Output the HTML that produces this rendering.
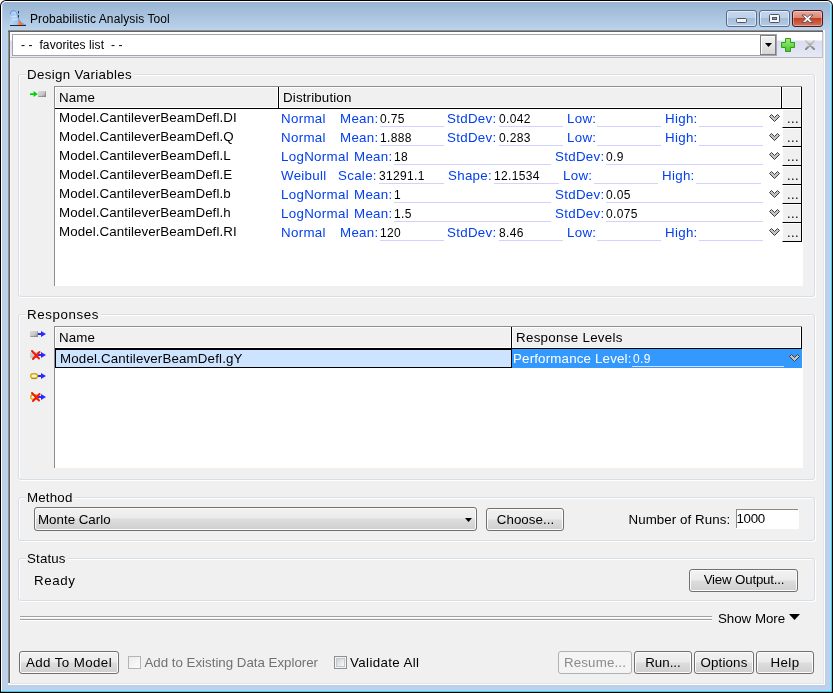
<!DOCTYPE html>
<html>
<head>
<meta charset="utf-8">
<title>Probabilistic Analysis Tool</title>
<style>
html,body{margin:0;padding:0;background:#fff;}
body{width:833px;height:693px;overflow:hidden;position:relative;font-family:"Liberation Sans",Arial,sans-serif;font-size:13px;color:#000;}
.a{position:absolute;}
.t{position:absolute;white-space:nowrap;line-height:19px;font-size:13.33px;letter-spacing:0.15px;}
.b{color:#0540ee;letter-spacing:0.3px;}
.n{letter-spacing:0.08px;}
.v{font-size:12px;letter-spacing:0.33px;margin-top:1px;}
/* window frame */
#w0{left:0;top:0;width:833px;height:693px;background:#000;border-radius:6px 6px 0 0;}
#w1{left:1px;top:1px;width:831px;height:691px;background:#fff;border-radius:5px 5px 0 0;}
#w2{left:2px;top:2px;width:829px;height:689px;background:linear-gradient(#98b4d2 0px,#bbd3ec 28px,#bdd2ea 40px,#bdd2ea 100%);border-radius:4px 4px 0 0;box-shadow:inset 1px 0 0 #b4cfea,inset -1px -1px 0 #c4d0e8;}
#cyr{left:831px;top:4px;width:1px;height:688px;background:#29d3f2;}
#cyb{left:1px;top:691px;width:831px;height:1px;background:#29d3f2;}
#client{left:8px;top:30px;width:817px;height:655px;background:#fff;box-shadow:1px 1px 0 #b4cfea;}
#cbg{left:10px;top:32px;width:813px;height:651px;background:#f0f0f0;border-right:1px solid #e4e4e4;border-bottom:1px solid #e4e4e4;}
#cl{left:8px;top:30px;width:3px;height:653px;background:linear-gradient(90deg,#8e8e8e 1px,#646464 1px,#646464 2px,#f8f8f8 2px);}
#ct{left:8px;top:30px;width:815px;height:2px;background:linear-gradient(#8e8e8e 1px,#646464 1px);}
/* toolbar */
#tb{left:10px;top:32px;width:813px;height:25px;background:linear-gradient(#fff 0,#fff 8px,#d9ddf0 9px,#e6e8f5 25px);}
#tbl{left:10px;top:57px;width:813px;height:1px;background:#b8b8b8;}
#combo{left:12px;top:34px;width:763px;height:20px;border:1px solid #a3a3ad;background:#fff;}
#cbtn{left:760px;top:35px;width:14px;height:18px;border:1px solid #7e7e7e;background:linear-gradient(#f4f4f4,#d6d6d6);box-shadow:inset 1px 1px 0 #fff;}
/* group boxes */
.g{position:absolute;border:1px solid #d5dfe5;border-radius:3px;box-shadow:1px 1px 0 #fff,inset 1px 1px 0 #fff;box-sizing:border-box;}
.gl{position:absolute;background:#f0f0f0;white-space:nowrap;line-height:15px;font-size:13.33px;letter-spacing:0.32px;padding:0 2px 0 1px;}
/* tables */
.tbl{position:absolute;background:#fff;}
.hd{position:absolute;background:#f0f0f0;}
.ul{position:absolute;height:1px;background:#d2d2ff;}
/* buttons */
.btn{position:absolute;box-sizing:border-box;border:1px solid #707070;border-radius:3px;background:linear-gradient(#f2f2f2 0,#ebebeb 10px,#dddddd 11px,#cfcfcf 100%);box-shadow:inset 0 0 0 1px #fcfcfc;text-align:center;font-size:13.33px;letter-spacing:0.15px;white-space:nowrap;}
.btn.dis{border-color:#adb2b5;background:#f4f4f4;color:#8b8b8b;box-shadow:none;}
</style>
</head>
<body>
<div id="root" style="position:absolute;left:0;top:0;width:833px;height:693px;will-change:transform;">
<div class="a" id="w0"></div>
<div class="a" id="w1"></div>
<div class="a" id="w2"></div>
<div class="a" id="cyr"></div>
<div class="a" id="cyb"></div>
<div class="a" id="client"></div>
<div class="a" id="cbg"></div>
<div class="a" id="cl"></div>
<div class="a" id="ct"></div>
<svg class="a" style="left:10px;top:10px" width="16" height="16" viewBox="0 0 16 16">
  <defs><linearGradient id="hg" x1="0" y1="0" x2="1" y2="1"><stop offset="0" stop-color="#8dbcf2"/><stop offset="0.5" stop-color="#b4d3f6"/><stop offset="1" stop-color="#8fbef4"/></linearGradient></defs>
  <path d="M0 15 V4 C0 1.2 1.6 0.2 3.6 0.2 C5.6 0.2 6.6 1.6 7.2 3.4 C7.9 5.6 8.1 7.6 8.6 9.2 V15 Z" fill="url(#hg)"/>
  <path d="M0.4 4.2 C0.4 1.4 1.8 0.6 3.6 0.6 C5.4 0.6 6.3 1.8 6.9 3.4" fill="none" stroke="#4c8ee4" stroke-width="1" opacity="0.85"/>
  <path d="M1.4 3.4 C2.2 2.2 4.6 2.0 5.6 3.4 M0.8 6.5 H6.5 M2 9.5 H7.6" fill="none" stroke="#d6e8fb" stroke-width="0.9" opacity="0.8"/>
  <path d="M8.3 9 C9.6 11.6 12 13.8 15.4 15 H8.3 Z" fill="#f9753f"/>
  <path d="M6.8 3.2 C7.8 6 8.6 9.4 10.2 11.4 C11.8 13.2 13.6 14.2 15.6 14.8" fill="none" stroke="#5a94e2" stroke-width="0.9" opacity="0.9"/>
  <path d="M8.5 1 V3.5 M8.5 5 V7.5" stroke="#2f3740" stroke-width="1"/>
  <rect x="0" y="15" width="16" height="1" fill="#2a2a2a"/>
</svg>
<div class="t" id="title" style="left:30px;top:10px;font-size:12px;line-height:19px;letter-spacing:0.1px;">Probabilistic Analysis Tool</div>
<!-- caption buttons -->
<div class="a capb" style="left:726px;"></div>
<div class="a capb" style="left:759px;"></div>
<div class="a capb capx" style="left:792px;"></div>
<svg class="a" style="left:736px;top:18px" width="11" height="5" viewBox="0 0 11 5"><rect x="0.5" y="0.5" width="10" height="4" rx="1" fill="#f4f4f4" stroke="#4b5563" stroke-width="1"/></svg>
<svg class="a" style="left:769px;top:14px" width="11" height="9" viewBox="0 0 11 9"><rect x="0.5" y="0.5" width="10" height="8" rx="1" fill="#f6f6f6" stroke="#4b5563" stroke-width="1"/><rect x="3.5" y="3.5" width="4" height="2" fill="#7fa3cf" stroke="#4b5563" stroke-width="1"/></svg>
<svg class="a" style="left:801px;top:13.6px" width="13" height="9.6" viewBox="0 0 13 11" preserveAspectRatio="none"><path d="M1 1.2 H4.2 L6.5 3.6 L8.8 1.2 H12 L8.4 5.5 L12 9.8 H8.8 L6.5 7.4 L4.2 9.8 H1 L4.6 5.5 Z" fill="#fbfbfb" stroke="#4d4f63" stroke-width="1" stroke-linejoin="round"/></svg>
<style>
.capb{top:10px;width:31px;height:17px;box-sizing:border-box;border:1px solid #586a8c;border-radius:3px;background:linear-gradient(#c3d6ec 0,#bcd0e8 47%,#a3bddb 50%,#b4cbe5 100%);box-shadow:inset 0 0 0 1px rgba(255,255,255,.55);}
.capx{border-color:#4a1620;background:linear-gradient(#e9a99b 0,#dc8675 47%,#c2401f 50%,#d4735c 100%);box-shadow:inset 0 0 0 1px rgba(255,255,255,.35);}
</style>
<div class="a" id="tb"></div>
<div class="a" id="tbl"></div>
<div class="a" style="left:822px;top:32px;width:1px;height:26px;background:#c2c2c2"></div>
<div class="a" id="combo"></div>
<div class="t" style="left:21px;top:36px;font-size:12px;line-height:19px;white-space:pre;letter-spacing:0.09px;">- -  favorites list  - -</div>
<div class="a" id="cbtn"></div>
<svg class="a" style="left:765px;top:43px" width="7" height="4" viewBox="0 0 7 4"><path d="M0 0 H7 L3.5 4 Z" fill="#000"/></svg>
<svg class="a" style="left:781px;top:38px" width="14" height="14" viewBox="0 0 14 14">
  <defs><linearGradient id="gp" x1="0" y1="0" x2="0" y2="1"><stop offset="0" stop-color="#9cec7c"/><stop offset="1" stop-color="#4cc62a"/></linearGradient></defs>
  <path d="M4.5 0.5 H9.5 V4.5 H13.5 V9.5 H9.5 V13.5 H4.5 V9.5 H0.5 V4.5 H4.5 Z" fill="url(#gp)" stroke="#2f9e16" stroke-width="1" stroke-linejoin="round"/>
</svg>
<svg class="a" style="left:805px;top:40px" width="10" height="10" viewBox="0 0 10 10">
  <defs><linearGradient id="gx" x1="0" y1="0" x2="0" y2="1"><stop offset="0" stop-color="#cfcfcf"/><stop offset="0.5" stop-color="#a9a9a9"/><stop offset="1" stop-color="#858585"/></linearGradient></defs>
  <path d="M1 1 L9 9 M9 1 L1 9" stroke="url(#gx)" stroke-width="2" stroke-linecap="round" fill="none"/>
</svg>
<div class="g" style="left:18px;top:74px;width:797px;height:223px"></div>
<div class="gl" style="left:26px;top:67px">Design Variables</div>
<svg class="a" style="left:30px;top:91px" width="16" height="6" viewBox="0 0 16 6">
  <defs><linearGradient id="gb" x1="0" y1="0" x2="1" y2="1"><stop offset="0" stop-color="#dcdcdc"/><stop offset="0.6" stop-color="#c4c4c4"/><stop offset="1" stop-color="#777"/></linearGradient></defs>
  <path d="M0 2.2 H3.6 V0 L7.8 3 L3.6 6 V3.9 H0 Z" fill="#00d400"/>
  <rect x="8" y="0" width="8" height="6" fill="url(#gb)"/>
  <path d="M8.5 5.5 H15.5 V0.5" stroke="#8c8c8c" stroke-width="1" fill="none" opacity="0.8"/>
</svg>
<!-- table 1 -->
<div class="a" style="left:54px;top:86px;width:748px;height:200px;background:#8e8e8e"></div>
<div class="tbl" style="left:55px;top:87px;width:748px;height:199px"></div><div class="hd" style="left:802px;top:86px;width:1px;height:23px"></div>
<div class="hd" style="left:56px;top:88px;width:221px;height:19px"></div>
<div class="hd" style="left:280px;top:88px;width:500px;height:19px"></div>
<div class="hd" style="left:783px;top:88px;width:17px;height:19px"></div>
<div class="a" style="left:55px;top:108px;width:747px;height:1px;background:#000"></div>
<div class="a" style="left:278px;top:87px;width:1px;height:22px;background:#000"></div>
<div class="a" style="left:781px;top:87px;width:1px;height:22px;background:#000"></div>
<div class="a" style="left:801px;top:87px;width:1px;height:155px;background:#000"></div>
<div class="t" style="left:59px;top:87px;line-height:21px">Name</div>
<div class="t" style="left:283px;top:87px;line-height:21px">Distribution</div>
<!-- row 0 -->
<div class="t n" style="left:59px;top:108px">Model.CantileverBeamDefl.DI</div>
<div class="t b" style="left:281px;top:109px">Normal</div>
<div class="t b" style="left:340px;top:109px">Mean:</div>
<div class="t v" style="left:380px;top:109px">0.75</div>
<div class="ul" style="left:380px;top:126px;width:64px"></div>
<div class="t b" style="left:447px;top:109px">StdDev:</div>
<div class="t v" style="left:499px;top:109px">0.042</div>
<div class="ul" style="left:499px;top:126px;width:64px"></div>
<div class="t b" style="left:567px;top:109px">Low:</div>
<div class="ul" style="left:597px;top:126px;width:64px"></div>
<div class="t b" style="left:665px;top:109px">High:</div>
<div class="ul" style="left:699px;top:126px;width:64px"></div>
<svg class="a chev" style="left:769px;top:114px" width="11" height="8" viewBox="0 0 11 8"><path d="M0.5 2.5 L2.5 0.5 L5.5 3.5 L8.5 0.5 L10.5 2.5 L5.5 7.5 Z" fill="#c3c3c3" stroke="#3e3e3e" stroke-width="1"/></svg>
<div class="a eb" style="left:782px;top:109px"><span>...</span></div>
<!-- row 1 -->
<div class="t n" style="left:59px;top:127px">Model.CantileverBeamDefl.Q</div>
<div class="t b" style="left:281px;top:128px">Normal</div>
<div class="t b" style="left:340px;top:128px">Mean:</div>
<div class="t v" style="left:380px;top:128px">1.888</div>
<div class="ul" style="left:380px;top:145px;width:64px"></div>
<div class="t b" style="left:447px;top:128px">StdDev:</div>
<div class="t v" style="left:499px;top:128px">0.283</div>
<div class="ul" style="left:499px;top:145px;width:64px"></div>
<div class="t b" style="left:567px;top:128px">Low:</div>
<div class="ul" style="left:597px;top:145px;width:64px"></div>
<div class="t b" style="left:665px;top:128px">High:</div>
<div class="ul" style="left:699px;top:145px;width:64px"></div>
<svg class="a chev" style="left:769px;top:133px" width="11" height="8" viewBox="0 0 11 8"><path d="M0.5 2.5 L2.5 0.5 L5.5 3.5 L8.5 0.5 L10.5 2.5 L5.5 7.5 Z" fill="#c3c3c3" stroke="#3e3e3e" stroke-width="1"/></svg>
<div class="a eb" style="left:782px;top:128px"><span>...</span></div>
<!-- row 2 -->
<div class="t n" style="left:59px;top:146px">Model.CantileverBeamDefl.L</div>
<div class="t b" style="left:281px;top:147px">LogNormal</div>
<div class="t b" style="left:354px;top:147px">Mean:</div>
<div class="t v" style="left:394px;top:147px">18</div>
<div class="ul" style="left:394px;top:164px;width:157px"></div>
<div class="t b" style="left:555px;top:147px">StdDev:</div>
<div class="t v" style="left:606px;top:147px">0.9</div>
<div class="ul" style="left:606px;top:164px;width:157px"></div>
<svg class="a chev" style="left:769px;top:152px" width="11" height="8" viewBox="0 0 11 8"><path d="M0.5 2.5 L2.5 0.5 L5.5 3.5 L8.5 0.5 L10.5 2.5 L5.5 7.5 Z" fill="#c3c3c3" stroke="#3e3e3e" stroke-width="1"/></svg>
<div class="a eb" style="left:782px;top:147px"><span>...</span></div>
<!-- row 3 -->
<div class="t n" style="left:59px;top:165px">Model.CantileverBeamDefl.E</div>
<div class="t b" style="left:281px;top:166px">Weibull</div>
<div class="t b" style="left:338px;top:166px">Scale:</div>
<div class="t v" style="left:379px;top:166px">31291.1</div>
<div class="ul" style="left:379px;top:183px;width:65px"></div>
<div class="t b" style="left:448px;top:166px">Shape:</div>
<div class="t v" style="left:494px;top:166px">12.1534</div>
<div class="ul" style="left:494px;top:183px;width:65px"></div>
<div class="t b" style="left:563px;top:166px">Low:</div>
<div class="ul" style="left:594px;top:183px;width:64px"></div>
<div class="t b" style="left:662px;top:166px">High:</div>
<div class="ul" style="left:696px;top:183px;width:65px"></div>
<svg class="a chev" style="left:769px;top:171px" width="11" height="8" viewBox="0 0 11 8"><path d="M0.5 2.5 L2.5 0.5 L5.5 3.5 L8.5 0.5 L10.5 2.5 L5.5 7.5 Z" fill="#c3c3c3" stroke="#3e3e3e" stroke-width="1"/></svg>
<div class="a eb" style="left:782px;top:166px"><span>...</span></div>
<!-- row 4 -->
<div class="t n" style="left:59px;top:184px">Model.CantileverBeamDefl.b</div>
<div class="t b" style="left:281px;top:185px">LogNormal</div>
<div class="t b" style="left:354px;top:185px">Mean:</div>
<div class="t v" style="left:394px;top:185px">1</div>
<div class="ul" style="left:394px;top:202px;width:157px"></div>
<div class="t b" style="left:555px;top:185px">StdDev:</div>
<div class="t v" style="left:606px;top:185px">0.05</div>
<div class="ul" style="left:606px;top:202px;width:157px"></div>
<svg class="a chev" style="left:769px;top:190px" width="11" height="8" viewBox="0 0 11 8"><path d="M0.5 2.5 L2.5 0.5 L5.5 3.5 L8.5 0.5 L10.5 2.5 L5.5 7.5 Z" fill="#c3c3c3" stroke="#3e3e3e" stroke-width="1"/></svg>
<div class="a eb" style="left:782px;top:185px"><span>...</span></div>
<!-- row 5 -->
<div class="t n" style="left:59px;top:203px">Model.CantileverBeamDefl.h</div>
<div class="t b" style="left:281px;top:204px">LogNormal</div>
<div class="t b" style="left:354px;top:204px">Mean:</div>
<div class="t v" style="left:394px;top:204px">1.5</div>
<div class="ul" style="left:394px;top:221px;width:157px"></div>
<div class="t b" style="left:555px;top:204px">StdDev:</div>
<div class="t v" style="left:606px;top:204px">0.075</div>
<div class="ul" style="left:606px;top:221px;width:157px"></div>
<svg class="a chev" style="left:769px;top:209px" width="11" height="8" viewBox="0 0 11 8"><path d="M0.5 2.5 L2.5 0.5 L5.5 3.5 L8.5 0.5 L10.5 2.5 L5.5 7.5 Z" fill="#c3c3c3" stroke="#3e3e3e" stroke-width="1"/></svg>
<div class="a eb" style="left:782px;top:204px"><span>...</span></div>
<!-- row 6 -->
<div class="t n" style="left:59px;top:222px">Model.CantileverBeamDefl.RI</div>
<div class="t b" style="left:281px;top:223px">Normal</div>
<div class="t b" style="left:340px;top:223px">Mean:</div>
<div class="t v" style="left:380px;top:223px">120</div>
<div class="ul" style="left:380px;top:240px;width:64px"></div>
<div class="t b" style="left:447px;top:223px">StdDev:</div>
<div class="t v" style="left:499px;top:223px">8.46</div>
<div class="ul" style="left:499px;top:240px;width:64px"></div>
<div class="t b" style="left:567px;top:223px">Low:</div>
<div class="ul" style="left:597px;top:240px;width:64px"></div>
<div class="t b" style="left:665px;top:223px">High:</div>
<div class="ul" style="left:699px;top:240px;width:64px"></div>
<svg class="a chev" style="left:769px;top:228px" width="11" height="8" viewBox="0 0 11 8"><path d="M0.5 2.5 L2.5 0.5 L5.5 3.5 L8.5 0.5 L10.5 2.5 L5.5 7.5 Z" fill="#c3c3c3" stroke="#3e3e3e" stroke-width="1"/></svg>
<div class="a eb" style="left:782px;top:223px"><span>...</span></div>
<style>
.eb{width:19px;height:18px;background:#f0f0f0;border-left:1px solid #fff;border-top:1px solid #fff;border-bottom:1px solid #000;box-sizing:content-box;width:18px;height:17px;font-size:13px;line-height:17px;}
.eb span{position:absolute;left:4px;top:0px;letter-spacing:0.4px;}
</style>
<div class="g" style="left:18px;top:314px;width:797px;height:166px"></div>
<div class="gl" style="left:26px;top:307px;letter-spacing:0.58px">Responses</div>
<!-- response icons -->
<svg class="a" style="left:29px;top:329px" width="18" height="76" viewBox="0 0 18 76">
  <!-- 1: add response (gray box + blue arrow) y=2..8 -->
  <rect x="1" y="2" width="8" height="6" fill="url(#gb)"/>
  <path d="M1.5 7.5 H8.5 V2.5" stroke="#8c8c8c" stroke-width="1" fill="none" opacity="0.8"/>
  <path d="M9 4 H12 V2 L17 5 L12 8 V6 H9 Z" fill="#2a2aff"/>
  <!-- 2: remove response y=23..29 -->
  <rect x="1" y="23" width="8" height="6" fill="url(#gb)"/>
  <path d="M9 25 H12 V23 L17 26 L12 29 V27 H9 Z" fill="#2a2aff"/>
  <path d="M3 22 L10 29.5 M10.5 23 L4 30" stroke="#f41a08" stroke-width="2" fill="none" stroke-linecap="round"/>
  <!-- 3: add constraint (yellow oval) y=44..50 -->
  <rect x="1.7" y="44.7" width="6.8" height="4.6" rx="2.3" fill="#f4f4f0" stroke="#d6a800" stroke-width="1.4"/>
  <path d="M2.5 49.6 H7.5" stroke="#a07c00" stroke-width="0.8"/>
  <path d="M9 46 H12 V44 L17 47 L12 50 V48 H9 Z" fill="#2a2aff"/>
  <!-- 4: remove constraint y=65..71 -->
  <rect x="1.7" y="65.7" width="6.8" height="4.6" rx="2.3" fill="#f4f4f0" stroke="#d6a800" stroke-width="1.4"/>
  <path d="M9 67 H12 V65 L17 68 L12 71 V69 H9 Z" fill="#2a2aff"/>
  <path d="M3 64 L10 71.5 M10.5 65 L4 72" stroke="#f41a08" stroke-width="2" fill="none" stroke-linecap="round"/>
</svg>
<!-- table 2 -->
<div class="a" style="left:54px;top:326px;width:748px;height:142px;background:#8e8e8e"></div>
<div class="tbl" style="left:55px;top:327px;width:748px;height:141px"></div><div class="hd" style="left:802px;top:326px;width:1px;height:23px"></div>
<div class="hd" style="left:56px;top:328px;width:454px;height:19px"></div>
<div class="hd" style="left:513px;top:328px;width:287px;height:19px"></div>
<div class="a" style="left:55px;top:348px;width:747px;height:1px;background:#000"></div>
<div class="a" style="left:511px;top:327px;width:1px;height:22px;background:#000"></div>
<div class="a" style="left:801px;top:327px;width:1px;height:22px;background:#000"></div>
<div class="t" style="left:59px;top:327px;line-height:21px">Name</div>
<div class="t" style="left:516px;top:327px;line-height:21px;letter-spacing:0.3px">Response Levels</div>
<!-- selected row -->
<div class="a" style="left:55px;top:348px;width:457px;height:20px;background:#000"></div>
<div class="a" style="left:56px;top:350px;width:455px;height:17px;background:#cce4ff"></div>
<div class="a" style="left:512px;top:349px;width:290px;height:19px;background:#3399ff"></div>
<div class="t" style="left:60px;top:349px">Model.CantileverBeamDefl.gY</div>
<div class="t" style="left:513px;top:349px;color:#fff;letter-spacing:0.17px">Performance Level:</div>
<div class="t v" style="left:633px;top:349px;color:#fff">0.9</div>
<div class="ul" style="left:632px;top:366px;width:152px;background:#dcdcff"></div>
<svg class="a" style="left:789px;top:354px" width="11" height="8" viewBox="0 0 11 8"><path d="M0.5 2.5 L2.5 0.5 L5.5 3.5 L8.5 0.5 L10.5 2.5 L5.5 7.5 Z" fill="#c3c3c3" stroke="#3e3e3e" stroke-width="1"/></svg>

<div class="g" style="left:18px;top:497px;width:797px;height:44px"></div>
<div class="gl" style="left:26px;top:490px;letter-spacing:0.17px">Method</div>
<div class="btn" style="left:34px;top:507px;width:443px;height:24px"></div>
<div class="t" style="left:38px;top:510px;letter-spacing:0px">Monte Carlo</div>
<svg class="a" style="left:465px;top:518px" width="7" height="4" viewBox="0 0 7 4"><path d="M0 0 H7 L3.5 4 Z" fill="#000"/></svg>
<div class="btn" style="left:486px;top:508px;width:78px;height:23px;line-height:21px;letter-spacing:0.05px;text-indent:1px">Choose...</div>
<div class="t" style="left:628.5px;top:510px;letter-spacing:0.07px">Number of Runs:</div>
<div class="a" style="left:736px;top:509px;width:63px;height:20px;background:#fff;"></div><div class="a" style="left:736px;top:509px;width:62px;height:1px;background:#8a8a8a"></div><div class="a" style="left:736px;top:509px;width:1px;height:19px;background:#8a8a8a"></div>
<div class="t" style="left:736.5px;top:509px;letter-spacing:-0.3px">1000</div>

<div class="g" style="left:18px;top:558px;width:797px;height:43px"></div>
<div class="gl" style="left:26px;top:551px;letter-spacing:0.15px">Status</div>
<div class="t" style="left:34px;top:571px;letter-spacing:0.6px">Ready</div>
<div class="btn" style="left:689px;top:569px;width:109px;height:23px;line-height:19px;letter-spacing:-0.2px;text-indent:1px">View Output...</div>

<div class="a" style="left:20px;top:616px;width:692px;height:1px;background:#a0a0a0"></div>
<div class="a" style="left:20px;top:617px;width:692px;height:1px;background:#fff"></div>
<div class="a" style="left:20px;top:619px;width:692px;height:1px;background:#a0a0a0"></div>
<div class="a" style="left:20px;top:620px;width:692px;height:1px;background:#fff"></div>
<div class="t" style="left:718px;top:609px;letter-spacing:-0.03px">Show More</div>
<svg class="a" style="left:789px;top:614px" width="11" height="6" viewBox="0 0 11 6"><path d="M0 0 H11 L5.5 6 Z" fill="#000"/></svg>
<div class="btn" style="left:19px;top:651px;width:100px;height:23px;line-height:21px;letter-spacing:0.4px">Add To Model</div>
<div class="a" style="left:128px;top:656px;width:13px;height:13px;box-sizing:border-box;border:1px solid #b4b4b4;background:linear-gradient(135deg,#ececec,#fbfbfb)"></div>
<div class="t" style="left:144.5px;top:653px;color:#727272;letter-spacing:-0.02px">Add to Existing Data Explorer</div>
<div class="a" style="left:334px;top:656px;width:13px;height:13px;box-sizing:border-box;border:1px solid #8e8f8f;background:#f4f4f4"></div><div class="a" style="left:336px;top:658px;width:9px;height:9px;box-sizing:border-box;border:1px solid #c3c7ce;background:linear-gradient(135deg,#cdd2d9,#f4f5f6 90%)"></div>
<div class="t" style="left:350px;top:653px;letter-spacing:0.37px">Validate All</div>
<div class="btn dis" style="left:558px;top:651px;width:74px;height:23px;line-height:21px">Resume...</div>
<div class="btn" style="left:634px;top:651px;width:58px;height:23px;line-height:21px;letter-spacing:0px">Run...</div>
<div class="btn" style="left:694px;top:651px;width:60px;height:23px;line-height:21px">Options</div>
<div class="btn" style="left:756px;top:651px;width:58px;height:23px;line-height:21px;letter-spacing:0.45px">Help</div>

</div>
</body>
</html>
